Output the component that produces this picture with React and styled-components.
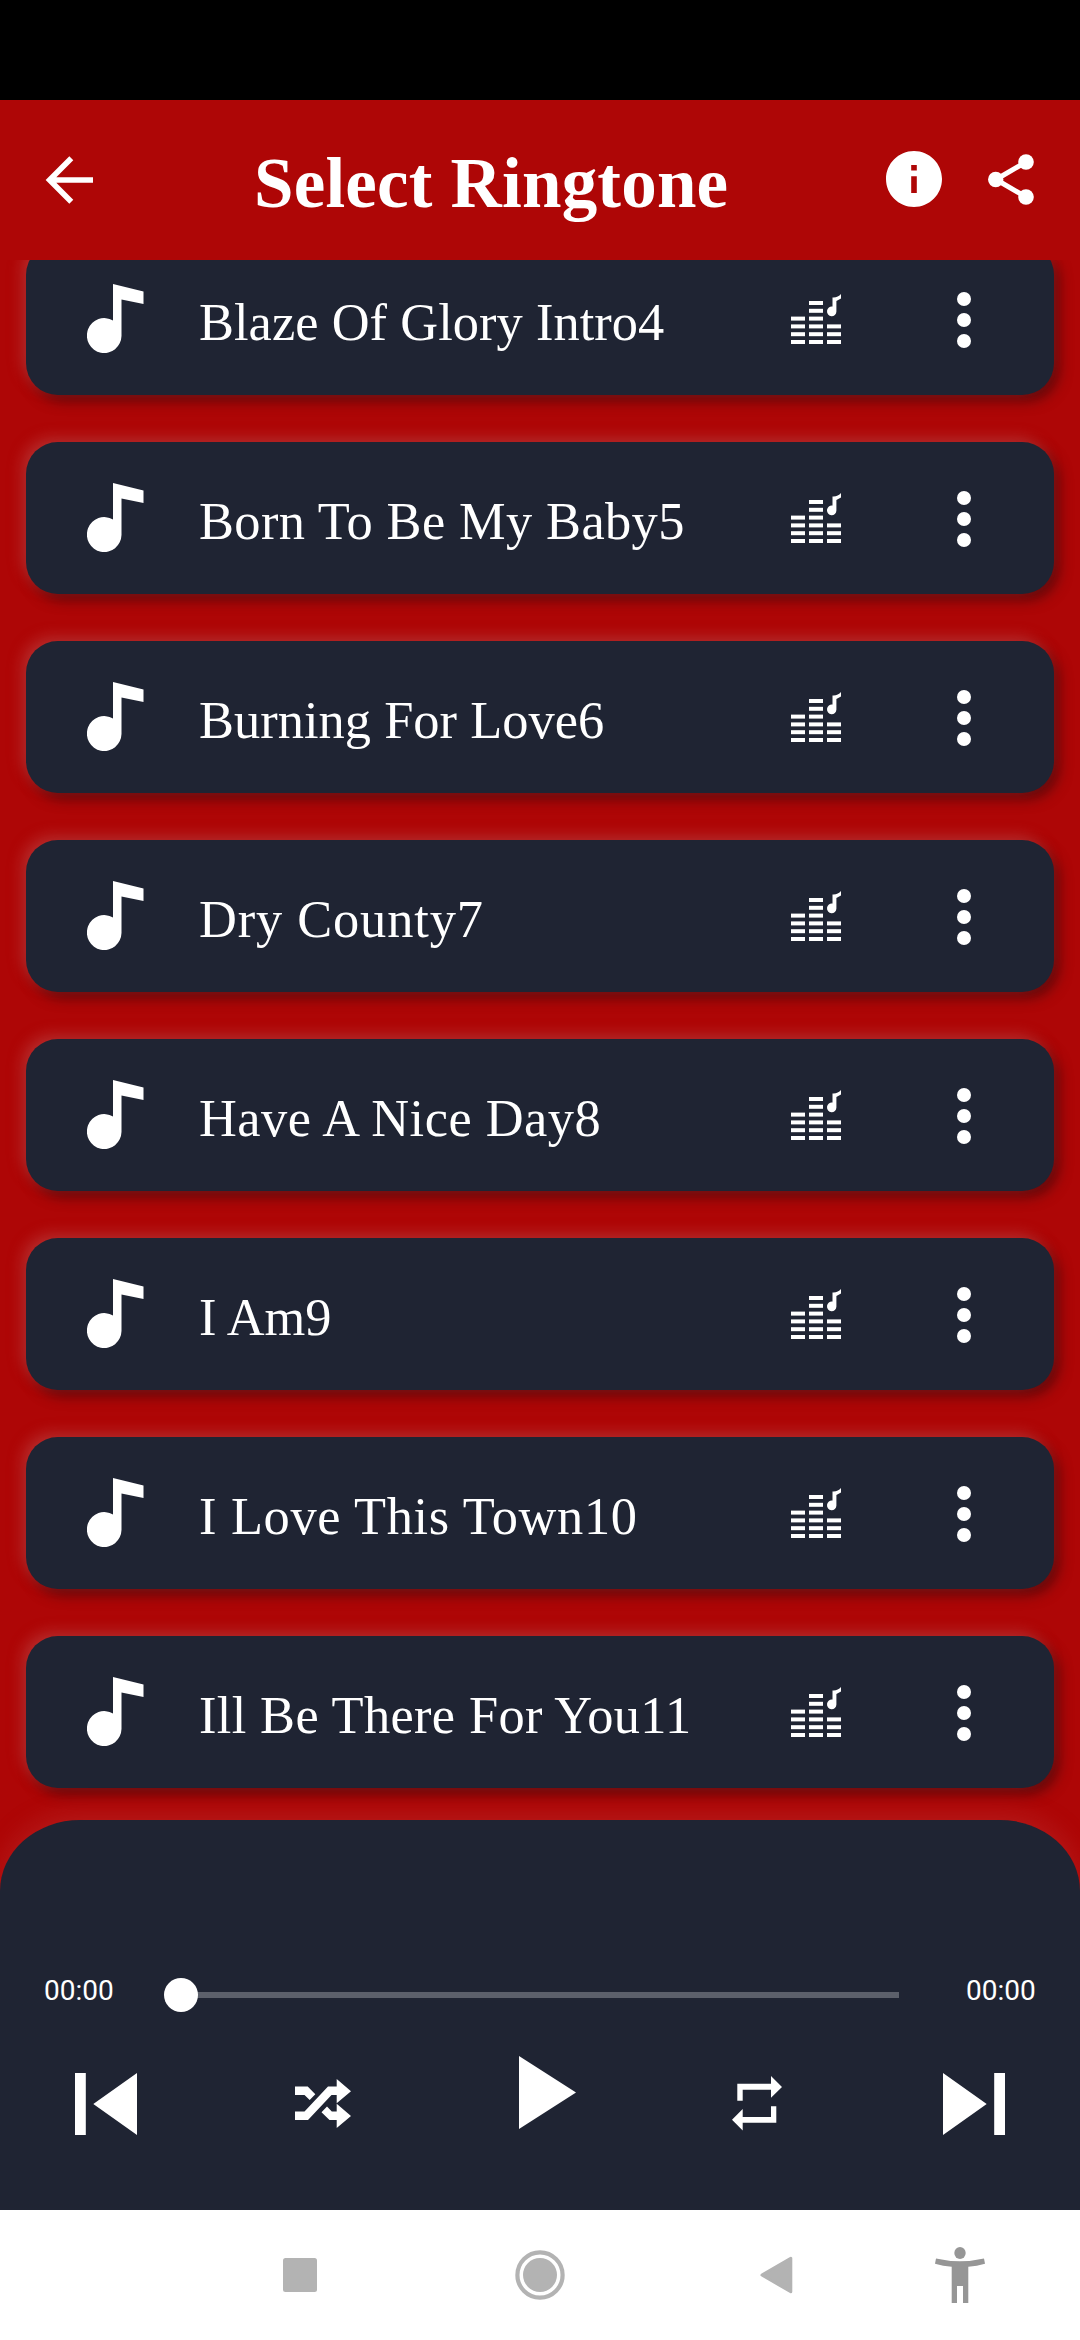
import React from "react";
import styled, { createGlobalStyle } from "styled-components";

const RED = "#ae0606";
const NAVY = "#1f2433";

const GlobalStyle = createGlobalStyle`
  * { box-sizing: border-box; }
  body { margin: 0; background: ${RED}; }
  svg { display: block; flex: none; }
`;

const Screen = styled.div`
  width: 1080px;
  height: 2340px;
  display: flex;
  flex-direction: column;
  overflow: hidden;
  background: ${RED};
  color: #fff;
`;

const StatusBar = styled.div`
  flex: none;
  height: 100px;
  background: #000;
`;

const Header = styled.header`
  flex: none;
  height: 160px;
  display: flex;
  align-items: flex-start;
  padding: 0 46px 0 45px;
`;

const HeaderIcon = styled.div`
  padding-top: ${(p) => p.$top}px;
  margin-left: ${(p) => p.$gap || 0}px;
`;

const Title = styled.h1`
  flex: 1;
  margin: 0;
  padding: 43px 0 0 159px;
  font: 700 71px/80px "Liberation Serif", serif;
  letter-spacing: 0.2px;
  white-space: nowrap;
`;

const List = styled.main`
  flex: none;
  height: 1560px;
  overflow: hidden;
  display: flex;
  flex-direction: column;
  justify-content: flex-end;
  gap: 47px;
  padding: 0 26px 32px;
`;

const Card = styled.div`
  flex: none;
  height: 152px;
  display: flex;
  align-items: flex-start;
  padding-left: 61px;
  border-radius: 32px;
  background: ${NAVY};
  box-shadow: -5px -5px 13px rgba(190, 56, 56, 0.7), 5px 6px 13px rgba(76, 10, 12, 0.8);
`;

const CardIcon = styled.div`
  width: ${(p) => p.$width}px;
  padding-top: ${(p) => p.$top}px;
`;

const Name = styled.div`
  width: 592px;
  padding-top: 49px;
  font: 400 52.4px/60px "Liberation Serif", serif;
  letter-spacing: ${(p) => p.$spacing}px;
  white-space: nowrap;
`;

const Player = styled.section`
  flex: none;
  height: 390px;
  border-radius: 80px 80px 0 0 / 71px 71px 0 0;
  background: ${NAVY};
  box-shadow: 0 -8px 22px rgba(190, 50, 50, 0.4);
  padding-top: 153px;
`;

const SeekRow = styled.div`
  height: 44px;
  display: flex;
  align-items: center;
  padding: 0 44px;
`;

const Time = styled.span`
  width: 70px;
  margin-top: -8px;
  font: 400 28px/32px Roboto, sans-serif;
  white-space: nowrap;
`;

const Track = styled.div`
  width: 718px;
  height: 6px;
  margin: 0 67px;
  display: flex;
  align-items: center;
  background: #5c606b;
`;

const Thumb = styled.div`
  flex: none;
  width: 34px;
  height: 34px;
  margin-left: -17px;
  border-radius: 50%;
  background: #fff;
`;

const Controls = styled.div`
  display: flex;
  align-items: flex-start;
  padding: 39px 75px 0;
`;

const Control = styled.div`
  padding-top: ${(p) => p.$top}px;
  margin-left: ${(p) => p.$gap || 0}px;
`;

const NavBar = styled.nav`
  flex: none;
  height: 130px;
  display: flex;
  align-items: center;
  background: #fff;
  padding: 0 95px 0 283px;
`;

const NavItem = styled.div`
  margin-left: ${(p) => p.$gap || 0}px;
`;

const BackIcon = () => (
  <svg width="50" height="50" viewBox="0 0 50 50" fill="none" stroke="#fff" strokeWidth="5.6">
    <path d="M48 25H6M26.3 3.3L4.6 25L26.3 46.7" />
  </svg>
);

const InfoIcon = () => (
  <svg width="56" height="56" viewBox="2 2 20 20" fill="#fff">
    <path d="M12 2C6.48 2 2 6.48 2 12s4.48 10 10 10 10-4.48 10-10S17.52 2 12 2zm1 15h-2v-6h2v6zm0-8h-2V7h2v2z" />
  </svg>
);

const ShareIcon = () => (
  <svg width="46" height="51" viewBox="0 0 46 51" fill="#fff">
    <path d="M8 25.5L38 8M8 25.5L38 43" stroke="#fff" strokeWidth="5" />
    <circle cx="38" cy="8" r="7.8" />
    <circle cx="7.7" cy="25.5" r="7.7" />
    <circle cx="38" cy="43" r="7.8" />
  </svg>
);

const NoteIcon = () => (
  <svg width="57" height="70" viewBox="0 0 57 70" fill="#fff">
    <path d="M26 0L56.500 7.500V20L34.500 15.500V52A17.300 17.500 0 1 1 26 36.500Z" />
  </svg>
);

const BAR_COLUMNS = [
  { x: 0, from: 2 },
  { x: 18, from: 0 },
  { x: 36, from: 3 },
];

const EqualizerIcon = () => (
  <svg width="50" height="50" viewBox="0 0 50 50" fill="#fff">
    {BAR_COLUMNS.map((c) =>
      [0, 1, 2, 3, 4, 5]
        .filter((i) => i >= c.from)
        .map((i) => <rect key={c.x + "-" + i} x={c.x} y={7 + i * 7.8} width="14" height="4" />)
    )}
    <path d="M41.500 3.500C45 3.800 48 2.500 50 0V4.600L45.400 7V17.500A4.700 4.900 0 1 1 41.500 12.600Z" />
  </svg>
);

const MoreIcon = () => (
  <svg width="14" height="56" viewBox="0 0 14 56" fill="#fff">
    <circle cx="7" cy="7" r="7" />
    <circle cx="7" cy="28" r="7" />
    <circle cx="7" cy="49" r="7" />
  </svg>
);

const PreviousIcon = () => (
  <svg width="62" height="62" viewBox="0 0 62 62" fill="#fff">
    <path d="M0 0H10.800V62H0ZM62 0V62L18.300 31Z" />
  </svg>
);

const NextIcon = () => (
  <svg width="62" height="62" viewBox="0 0 62 62" fill="#fff">
    <path d="M51.200 0H62V62H51.200ZM0 0L43.700 31L0 62Z" />
  </svg>
);

const ShuffleIcon = () => (
  <svg width="56" height="49" viewBox="0 0 56 49" fill="#fff">
    <path d="M0 7.600H12.700L20.300 15.200L14.700 21L9.500 16H0ZM0 32.500H9.500L33 7.600H41.700V0L56 12.200L41.700 24.300V16H36.500L13 41H0ZM41.700 24.700L56 36.900L41.700 49V41H34.500L26.500 33.200L32 27.500L36.800 32.500H41.700Z" />
  </svg>
);

const PlayIcon = () => (
  <svg width="57" height="73" viewBox="0 0 57 73" fill="#fff">
    <path d="M0 0L57 36.500L0 73Z" />
  </svg>
);

const RepeatIcon = () => (
  <svg width="50" height="55" viewBox="0 0 50 55" fill="#fff">
    <path d="M5.300 7.700H39V0L50 11L39 21.700V13.700H10.700V24.700H5.300ZM44.300 30.300V46.700H10.700V54.500L0 43.800L10.700 33V41H39V30.300Z" />
  </svg>
);

const RecentsIcon = () => (
  <svg width="34" height="34" viewBox="0 0 34 34">
    <rect width="34" height="34" rx="2.500" fill="#b3b3b3" />
  </svg>
);

const HomeIcon = () => (
  <svg width="50" height="50" viewBox="0 0 50 50">
    <circle cx="25" cy="25" r="22.600" fill="none" stroke="#b3b3b3" strokeWidth="4.200" />
    <circle cx="25" cy="25" r="17" fill="#b3b3b3" />
  </svg>
);

const NavBackIcon = () => (
  <svg width="33" height="38" viewBox="0 0 33 38">
    <path d="M30.800 2.200V35.800L2 19Z" fill="#b3b3b3" stroke="#b3b3b3" strokeWidth="3" strokeLinejoin="round" />
  </svg>
);

const AccessibilityIcon = () => (
  <svg width="50" height="56" viewBox="0 0 50 56" fill="#969696">
    <ellipse cx="25" cy="6" rx="5.700" ry="6" />
    <path d="M1 11.500Q25 17 49 11.500L50 16.700Q42 19 33.300 19.700V56H28V39H22V56H16.700V19.700Q8 19 0 16.700Z" />
  </svg>
);

const RINGTONES = [
  { name: "Blaze Of Glory Intro4", spacing: 0.06 },
  { name: "Born To Be My Baby5", spacing: 0.38 },
  { name: "Burning For Love6", spacing: 0.04 },
  { name: "Dry County7", spacing: 0.89 },
  { name: "Have A Nice Day8", spacing: 0.5 },
  { name: "I Am9", spacing: 0 },
  { name: "I Love This Town10", spacing: 0.67 },
  { name: "Ill Be There For You11", spacing: 0.36 },
];

export default function App() {
  return (
    <Screen>
      <GlobalStyle />
      <StatusBar />
      <Header>
        <HeaderIcon $top={55}><BackIcon /></HeaderIcon>
        <Title>Select Ringtone</Title>
        <HeaderIcon $top={51}><InfoIcon /></HeaderIcon>
        <HeaderIcon $top={54} $gap={46}><ShareIcon /></HeaderIcon>
      </Header>
      <List>
        {RINGTONES.map((r) => (
          <Card key={r.name}>
            <CardIcon $top={41} $width={112}><NoteIcon /></CardIcon>
            <Name $spacing={r.spacing}>{r.name}</Name>
            <CardIcon $top={51} $width={166}><EqualizerIcon /></CardIcon>
            <CardIcon $top={48.5} $width={14}><MoreIcon /></CardIcon>
          </Card>
        ))}
      </List>
      <Player>
        <SeekRow>
          <Time>00:00</Time>
          <Track><Thumb /></Track>
          <Time>00:00</Time>
        </SeekRow>
        <Controls>
          <Control $top={17}><PreviousIcon /></Control>
          <Control $top={23} $gap={158}><ShuffleIcon /></Control>
          <Control $top={0} $gap={168}><PlayIcon /></Control>
          <Control $top={20} $gap={156}><RepeatIcon /></Control>
          <Control $top={17} $gap={161}><NextIcon /></Control>
        </Controls>
      </Player>
      <NavBar>
        <NavItem><RecentsIcon /></NavItem>
        <NavItem $gap={198}><HomeIcon /></NavItem>
        <NavItem $gap={195}><NavBackIcon /></NavItem>
        <NavItem $gap={142}><AccessibilityIcon /></NavItem>
      </NavBar>
    </Screen>
  );
}
